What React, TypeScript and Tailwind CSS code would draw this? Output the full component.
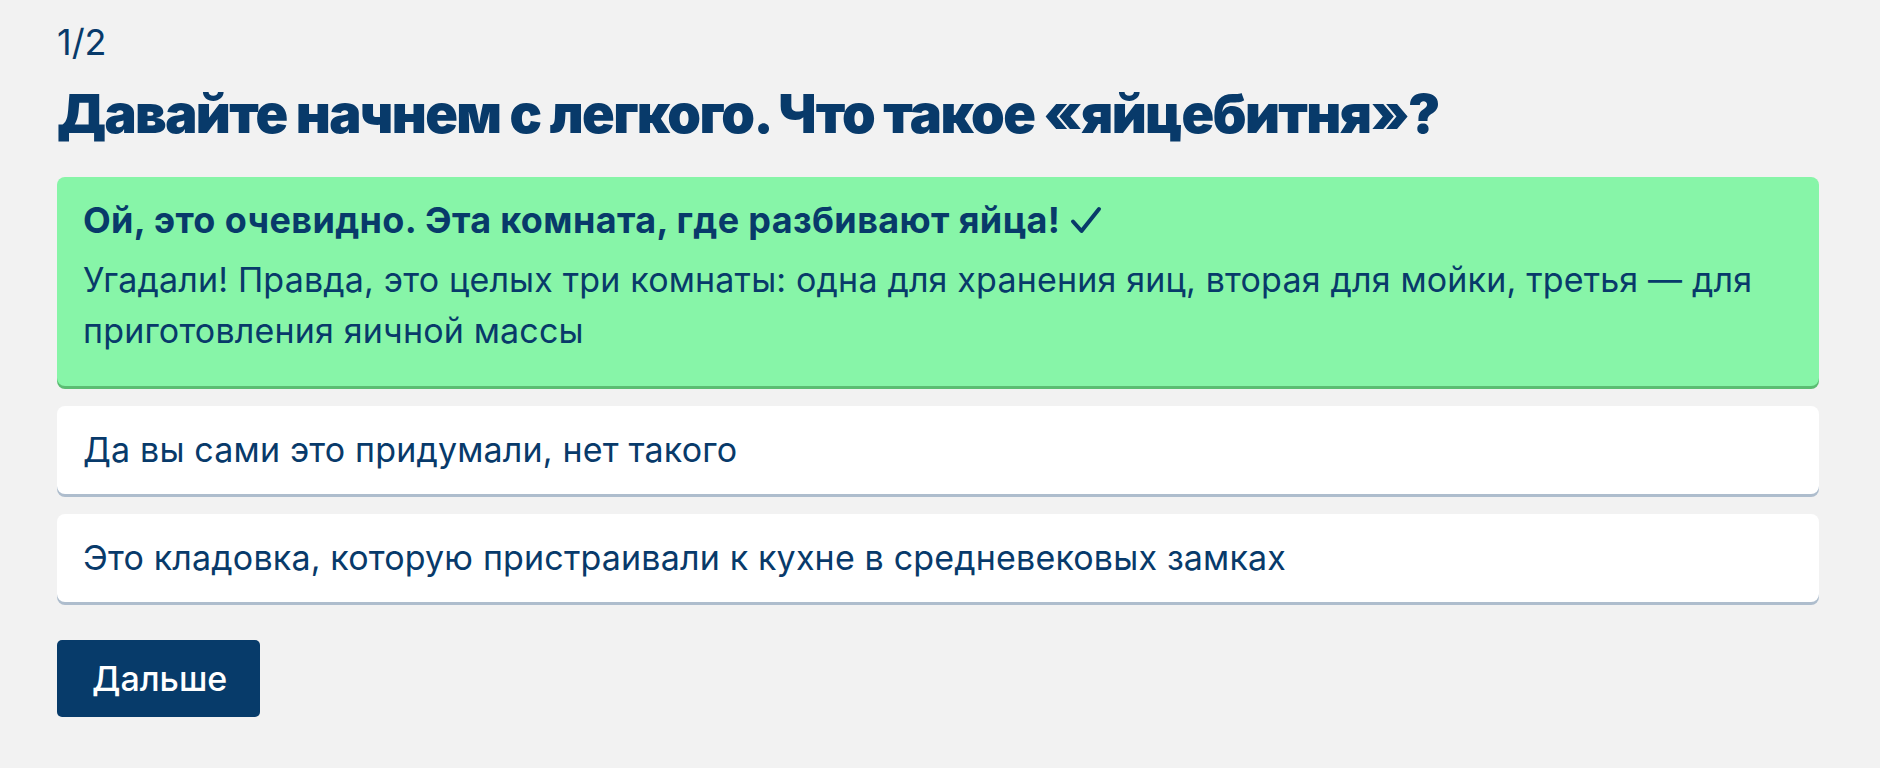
import React from "react";

const options = [
    {
        title: "Ой, это очевидно. Эта комната, где разбивают яйца!",
        note: "Угадали! Правда, это целых три комнаты: одна для хранения яиц, вторая для мойки, третья — для приготовления яичной массы",
        correct: true,
    },
    { title: "Да вы сами это придумали, нет такого" },
    { title: "Это кладовка, которую пристраивали к кухне в средневековых замках" },
];

function Check() {
    return (
        <svg
            viewBox="0 0 32 28"
            className="ml-[10px] inline-block h-[28px] w-[32px] align-[-1px]"
            fill="none"
            stroke="currentColor"
            strokeWidth={4}
            strokeLinecap="round"
            strokeLinejoin="round"
        >
            <path d="M3 15.5 L11.5 25 L29 3" />
        </svg>
    );
}

export default function App() {
    return (
        <div className="min-h-screen bg-[#f2f2f2] pl-[57px] pr-[61px] pt-[21px] pb-10 text-[#083a6a] font-['Inter','Noto_Sans',sans-serif]">
            <div className="text-[36px] leading-[1.2]">1/2</div>

            <h1 className="mt-[18px] text-[54px] leading-[1.2] font-black tracking-[-0.03em]">
                Давайте начнем с легкого. Что такое «яйцебитня»?
            </h1>

            <div className="mt-[30px] flex flex-col gap-[20px]">
                {options.map((o) =>
                    o.correct ? (
                        <div
                            key={o.title}
                            className="rounded-[8px] bg-[#87f5a8] px-[26px] pt-[18px] pb-[30px] text-[34px] leading-[51px] tracking-[0.005em] shadow-[0_3px_0_#5bbd72]"
                        >
                            <div className="text-[36px] font-bold tracking-[0.01em]">
                                {o.title}
                                <Check />
                            </div>
                            <p className="mt-[8px]">{o.note}</p>
                        </div>
                    ) : (
                        <div
                            key={o.title}
                            className="rounded-[8px] bg-white px-[26px] pt-[18px] pb-[19px] text-[34px] leading-[51px] tracking-[0.005em] shadow-[0_3px_0_#aebdcd]"
                        >
                            {o.title}
                        </div>
                    )
                )}
            </div>

            <button className="mt-[38px] h-[77px] w-[203px] rounded-[5px] bg-[#073b6a] text-left pl-[35px] text-[34px] font-medium text-white">
                Дальше
            </button>
        </div>
    );
}
